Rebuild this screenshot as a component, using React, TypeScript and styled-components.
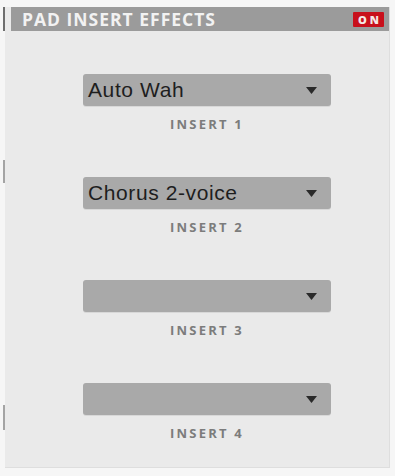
import React from 'react';
import styled, { createGlobalStyle } from 'styled-components';

const GlobalStyle = createGlobalStyle`
  html, body {
    margin: 0;
    padding: 0;
    background: #f6f6f6;
  }
`;

const Frame = styled.div`
  display: flex;
  margin: 7px 0 0 3px;
  width: 387px;
  height: 461px;
`;

// left edge with the little dark ticks
const Rail = styled.div`
  width: 2px;
  flex-shrink: 0;
  background: linear-gradient(
    to bottom,
    #6e6e6e 0px,
    #6e6e6e 24px,
    transparent 24px,
    transparent 153px,
    #a4a4a4 153px,
    #a4a4a4 176px,
    transparent 176px,
    transparent 398px,
    #a4a4a4 398px,
    #a4a4a4 423px,
    transparent 423px
  );
`;

const Panel = styled.div`
  flex: 1;
  display: flex;
  flex-direction: column;
  background: #eaeaea;
  padding-left: 6px;
  border-bottom: 1px solid #dedede;
  border-right: 1px solid #dedede;
`;

const Header = styled.div`
  height: 24px;
  display: flex;
  align-items: center;
  justify-content: space-between;
  background: #9b9b9b;
  padding: 0 5px 0 11px;
`;

const Title = styled.span`
  font-family: 'Open Sans', 'DejaVu Sans', sans-serif;
  font-weight: 700;
  font-size: 17.5px;
  letter-spacing: 1px;
  color: #f2f2f2;
`;

const Badge = styled.span`
  display: flex;
  align-items: center;
  justify-content: center;
  width: 31px;
  height: 15px;
  background: #c8101c;
  border-radius: 1px;
  font-family: 'Open Sans', 'DejaVu Sans', sans-serif;
  font-weight: 800;
  font-size: 11px;
  letter-spacing: 3px;
  padding-left: 3px;
  box-sizing: border-box;
  color: #f4e8e8;
`;

const SlotList = styled.div`
  display: flex;
  flex-direction: column;
  align-items: center;
  gap: 46px;
  padding: 43px 0 0 14px;
`;

const Slot = styled.div`
  display: flex;
  flex-direction: column;
  align-items: center;
`;

const Select = styled.div`
  width: 248px;
  height: 32px;
  box-sizing: border-box;
  display: flex;
  align-items: center;
  justify-content: space-between;
  padding: 0 14px 0 5px;
  background: #a9a9a9;
  border-radius: 3px;
  box-shadow: 0 1px 0 #d8d8d8;
`;

const SelectText = styled.span`
  font-family: 'Liberation Sans', Arial, sans-serif;
  font-size: 21px;
  letter-spacing: 0.6px;
  color: #1e1e1e;
  white-space: nowrap;
`;

const Label = styled.span`
  margin-top: 11px;
  line-height: 14px;
  font-family: 'Open Sans', 'DejaVu Sans', sans-serif;
  font-weight: 700;
  font-size: 13px;
  letter-spacing: 2.2px;
  color: #7c7c7c;
`;

const Arrow = () => (
  <svg width="11" height="7" viewBox="0 0 11 7">
    <path d="M0 0 H11 L5.5 7 Z" fill="#2a2a2a" />
  </svg>
);

const inserts = ['Auto Wah', 'Chorus 2-voice', '', ''];

export default function App() {
  return (
    <>
      <GlobalStyle />
      <Frame>
        <Rail />
        <Panel>
          <Header>
            <Title>PAD INSERT EFFECTS</Title>
            <Badge>ON</Badge>
          </Header>
          <SlotList>
            {inserts.map((name, i) => (
              <Slot key={i}>
                <Select>
                  <SelectText>{name}</SelectText>
                  <Arrow />
                </Select>
                <Label>INSERT {i + 1}</Label>
              </Slot>
            ))}
          </SlotList>
        </Panel>
      </Frame>
    </>
  );
}
